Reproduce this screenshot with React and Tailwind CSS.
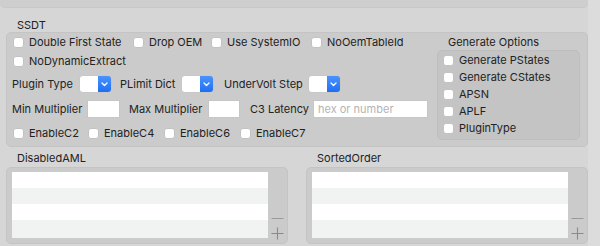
import React from 'react';

const Check = ({ label, className = '' }) => (
  <div className={`flex items-center h-[17px] ${className}`}>
    <span className="w-[11px] h-[11px] rounded-[3px] bg-white border border-[#c2c2c2] shrink-0" />
    <span className="ml-[5px] whitespace-nowrap">{label}</span>
  </div>
);

const Dropdown = () => (
  <div className="flex shrink-0 h-[18px] w-[33px] rounded-[4px] overflow-hidden border border-[#c8c8c8]">
    <div className="w-[18px] bg-white" />
    <div className="flex-1 bg-gradient-to-b from-[#4a93fb] to-[#1d6ef3] flex items-center justify-center">
      <svg width="7" height="5" viewBox="0 0 7 5" fill="none">
        <path d="M1 1l2.5 2.5L6 1" stroke="white" strokeWidth="1.3" strokeLinecap="round" strokeLinejoin="round" />
      </svg>
    </div>
  </div>
);

const Field = ({ className = '', placeholder }) => (
  <div className={`shrink-0 h-[18px] bg-white border border-[#c6c6c6] flex items-center px-[4px] text-[#b4b4b4] whitespace-nowrap ${className}`}>
    {placeholder}
  </div>
);

const ListBox = ({ title }) => (
  <div className="w-[282px] flex flex-col">
    <div className="pl-[11px] h-[14px] leading-[14px] mt-[4px]">{title}</div>
    <div className="mt-[2px] h-[77px] rounded-[5px] bg-[#cbcbcb] border border-[#c4c4c4] flex pl-[5px] pt-[4px]">
      <div className="w-[256px] h-[66px] flex flex-col">
        <div className="h-[16px] bg-white" />
        <div className="h-[16px] bg-[#f1f2f2]" />
        <div className="h-[16px] bg-white" />
        <div className="h-[18px] bg-[#f1f2f2]" />
      </div>
      <div className="flex-1 flex flex-col items-center justify-end pb-[3px]">
        <svg width="13" height="13" viewBox="0 0 13 13">
          <path d="M0.5 6.5h12" stroke="#9a9a9a" strokeWidth="1" />
        </svg>
        <svg width="13" height="13" viewBox="0 0 13 13" className="mt-[2px]">
          <path d="M0.5 6.5h12M6.5 0.5v12" stroke="#8a8a8a" strokeWidth="1.1" />
        </svg>
      </div>
    </div>
  </div>
);

export default function App() {
  return (
    <div className="w-[600px] h-[246px] overflow-hidden bg-[#d6d6d6] flex text-[11px] text-[#222222]" style={{ fontFamily: 'Inter, "Liberation Sans", sans-serif' }}>
      <div className="w-[588px] flex flex-col">
        <div className="h-[8px] bg-[#cecece] rounded-b-[5px] border-b border-[#c8c8c8]" />
        <div className="pl-[6px]">
          <div className="pl-[11px] mt-[10px] h-[14px] leading-[14px]">SSDT</div>
          <div className="mt-[0px] h-[115px] rounded-[5px] bg-[#cbcbcb] border border-[#c4c4c4] flex">
            <div className="flex-1 pl-[6px] pt-[1px]">
              <div className="flex">
                <Check label="Double First State" className="w-[120px]" />
                <Check label="Drop OEM" className="w-[78px]" />
                <Check label="Use SystemIO" className="w-[100px]" />
                <Check label="NoOemTableId" />
              </div>
              <Check label="NoDynamicExtract" className="mt-[2px]" />
              <div className="flex items-center mt-[5px] h-[18px] -ml-[1px] whitespace-nowrap">
                <span className="w-[67px] shrink-0">Plugin Type</span>
                <Dropdown />
                <span className="ml-[8px] w-[61px] shrink-0">PLimit Dict</span>
                <Dropdown />
                <span className="ml-[10px] w-[84px] shrink-0">UnderVolt Step</span>
                <Dropdown />
              </div>
              <div className="flex items-center mt-[7px] h-[18px] -ml-[1px] whitespace-nowrap">
                <span className="w-[75px] shrink-0">Min Multiplier</span>
                <Field className="w-[33px]" />
                <span className="ml-[9px] w-[79px] shrink-0">Max Multiplier</span>
                <Field className="w-[32px]" />
                <span className="ml-[10px] w-[63px] shrink-0">C3 Latency</span>
                <Field className="w-[115px]" placeholder="hex or number" />
              </div>
              <div className="flex mt-[7px]">
                <Check label="EnableC2" className="w-[75px]" />
                <Check label="EnableC4" className="w-[76px]" />
                <Check label="EnableC6" className="w-[76px]" />
                <Check label="EnableC7" />
              </div>
            </div>
            <div className="w-[143px] mr-[7px] pt-[1px]">
              <div className="pl-[11px] h-[14px] leading-[14px] mt-[1px] whitespace-nowrap">Generate Options</div>
              <div className="mt-[1px] h-[90px] rounded-[5px] bg-[#c4c4c4] border border-[#bebebe] pl-[5px] pt-[1px]">
                <Check label="Generate PStates" />
                <Check label="Generate CStates" />
                <Check label="APSN" />
                <Check label="APLF" />
                <Check label="PluginType" />
              </div>
            </div>
          </div>
          <div className="flex gap-[18px]">
            <ListBox title="DisabledAML" />
            <ListBox title="SortedOrder" />
          </div>
        </div>
      </div>
      <div className="flex-1 bg-[#dcdcdc]" />
    </div>
  );
}
